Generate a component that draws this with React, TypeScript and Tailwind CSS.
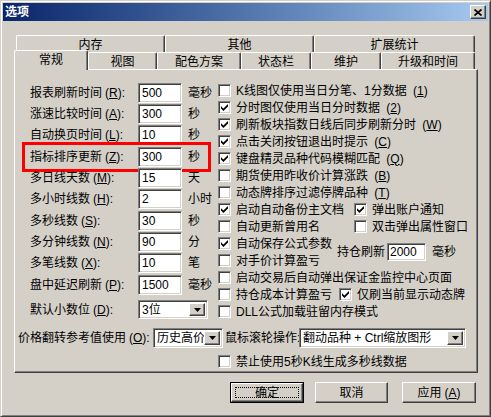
import React from 'react';

const sunken =
  'border border-t-[#808080] border-l-[#808080] border-b-white border-r-white shadow-[inset_1px_1px_0_#404040,inset_-1px_-1px_0_#d4d0c8] bg-white';
const raised =
  'border border-t-white border-l-white border-b-[#404040] border-r-[#404040] shadow-[inset_-1px_-1px_0_#808080] bg-[#d4d0c8]';

function Acc({ k }: { k: string }) {
  return (
    <span className="ml-[3px]">
      (<u>{k}</u>)
    </span>
  );
}

function Check({ checked }: { checked?: boolean }) {
  return (
    <span className={`flex items-center justify-center w-[13px] h-[13px] shrink-0 ${sunken}`}>
      {checked && (
        <svg width="7" height="7" viewBox="0 0 7 7">
          <path d="M0 2.2 L2.4 4.6 L7 0 V2.4 L2.4 7 L0 4.6 Z" fill="#000" />
        </svg>
      )}
    </span>
  );
}

function CheckItem({ checked, children, className = '' }: { checked?: boolean; children: React.ReactNode; className?: string }) {
  return (
    <div className={`flex items-center h-[17px] ${className}`}>
      <Check checked={checked} />
      <span className="ml-[5px] whitespace-nowrap">{children}</span>
    </div>
  );
}

function Arrow() {
  return (
    <span className={`flex items-center justify-center w-[16px] h-full shrink-0 ${raised}`}>
      <svg width="7" height="4" viewBox="0 0 7 4">
        <path d="M0 0 H7 L3.5 4 Z" fill="#000" />
      </svg>
    </span>
  );
}

function Combo({ value, className }: { value: string; className: string }) {
  return (
    <div className={`flex items-stretch p-[2px] ${sunken} ${className}`}>
      <span className="flex-1 flex items-center pl-[1px] whitespace-nowrap overflow-hidden">{value}</span>
      <Arrow />
    </div>
  );
}

const leftRows = [
  { label: '报表刷新时间', k: 'R', value: '500', unit: '毫秒' },
  { label: '涨速比较时间', k: 'A', value: '300', unit: '秒' },
  { label: '自动换页时间', k: 'L', value: '10', unit: '秒' },
  { label: '指标排序更新', k: 'Z', value: '300', unit: '秒', mark: true },
  { label: '多日线天数', k: 'M', value: '15', unit: '天' },
  { label: '多小时线数', k: 'H', value: '2', unit: '小时' },
  { label: '多秒线数', k: 'S', value: '30', unit: '秒' },
  { label: '多分钟线数', k: 'N', value: '90', unit: '分' },
  { label: '多笔线数', k: 'X', value: '10', unit: '笔' },
  { label: '盘中延迟刷新', k: 'P', value: '1500', unit: '毫秒' },
];

function LeftColumn() {
  return (
    <div className="ml-[15px] w-[188px] shrink-0 flex flex-col">
      {leftRows.map((r) => (
        <div key={r.label} className="relative flex items-center h-[21.33px]">
          <span className="w-[108px] whitespace-nowrap">
            {r.label}
            <Acc k={r.k} />:
          </span>
          <span className={`flex items-center w-[44px] h-[20px] pl-[3px] ${sunken}`}>{r.value}</span>
          <span className="ml-[6px] whitespace-nowrap">{r.unit}</span>
          {r.mark && (
            <div className="absolute left-[-8px] top-[-4px] w-[189px] h-[30px] border-[3px] border-[#ff0000]" />
          )}
        </div>
      ))}
      <div className="flex items-center h-[19px] mt-[5px]">
        <span className="w-[108px] whitespace-nowrap">
          默认小数位
          <Acc k="D" />:
        </span>
        <Combo value="3位" className="w-[70px] h-[19px]" />
      </div>
    </div>
  );
}

function RightColumn() {
  return (
    <div className="flex flex-col">
      <CheckItem>K线图仅使用当日分笔、1分数据 <Acc k="1" /></CheckItem>
      <CheckItem checked>分时图仅使用当日分时数据 <Acc k="2" /></CheckItem>
      <CheckItem checked>刷新板块指数日线后同步刷新分时 <Acc k="W" /></CheckItem>
      <CheckItem checked>点击关闭按钮退出时提示 <Acc k="C" /></CheckItem>
      <CheckItem checked>键盘精灵品种代码模糊匹配 <Acc k="Q" /></CheckItem>
      <CheckItem>期货使用昨收价计算涨跌 <Acc k="B" /></CheckItem>
      <CheckItem>动态牌排序过滤停牌品种 <Acc k="T" /></CheckItem>
      <div className="flex">
        <CheckItem checked className="w-[136px]">启动自动备份主文档</CheckItem>
        <CheckItem checked>弹出账户通知</CheckItem>
      </div>
      <div className="flex">
        <CheckItem className="w-[136px]">自动更新曾用名</CheckItem>
        <CheckItem>双击弹出属性窗口</CheckItem>
      </div>
      <div className="flex items-center">
        <div className="flex flex-col w-[119px]">
          <CheckItem checked>自动保存公式参数</CheckItem>
          <CheckItem>对手价计算盈亏</CheckItem>
        </div>
        <span className="w-[50px] whitespace-nowrap">持仓刷新</span>
        <span className={`flex items-center w-[39px] h-[18px] pl-[2px] ${sunken}`}>2000</span>
        <span className="ml-[6px]">毫秒</span>
      </div>
      <CheckItem>启动交易后自动弹出保证金监控中心页面</CheckItem>
      <div className="flex">
        <CheckItem className="w-[121px]">持仓成本计算盈亏</CheckItem>
        <CheckItem checked>仅刷当前显示动态牌</CheckItem>
      </div>
      <CheckItem>DLL公式加载驻留内存模式</CheckItem>
    </div>
  );
}

function Panel() {
  return (
    <div className="w-[464px] h-[304px] border border-t-white border-l-white border-b-[#404040] border-r-[#404040] shadow-[inset_-1px_-1px_0_#808080]">
      <div className="flex pt-[12px]">
        <LeftColumn />
        <RightColumn />
      </div>
      <div className="flex items-center h-[20px] mt-[8px] ml-[3px]">
        <span className="w-[135px] whitespace-nowrap">
          价格翻转参考值使用
          <Acc k="O" />:
        </span>
        <Combo value="历史高价" className="w-[70px] h-[20px]" />
        <span className="ml-[2px] w-[74px] whitespace-nowrap">鼠标滚轮操作:</span>
        <Combo value="翻动品种 + Ctrl缩放图形" className="w-[167px] h-[20px]" />
      </div>
      <div className="mt-[5px] pl-[203px]">
        <CheckItem>禁止使用5秒K线生成多秒线数据</CheckItem>
      </div>
    </div>
  );
}

const topTabs = [
  { label: '内存', w: 'w-[149px]' },
  { label: '其他', w: 'w-[149px]' },
  { label: '扩展统计', w: 'w-[161px]' },
];

const bottomTabs = [
  { label: '视图', w: 'w-[69px]' },
  { label: '配色方案', w: 'w-[84px]' },
  { label: '状态栏', w: 'w-[70px]' },
  { label: '维护', w: 'w-[70px]' },
  { label: '升级和时间', w: 'w-[94px]' },
];

const tabEdge =
  'border-t border-l border-r border-t-white border-l-white border-r-[#404040] shadow-[inset_-1px_0_0_#808080] rounded-t-[2px] bg-[#d4d0c8]';

function Tabs() {
  return (
    <div>
      <div className="flex ml-[2px] h-[17px]">
        {topTabs.map((t) => (
          <div key={t.label} className={`flex items-center justify-center h-[17px] pt-[1px] ${t.w} ${tabEdge}`}>
            {t.label}
          </div>
        ))}
      </div>
      <div className="flex items-end h-[17px]">
        <div className={`relative z-10 -mb-[1px] flex items-center justify-center w-[74px] h-[20px] pb-[2px] ${tabEdge}`}>
          常规
        </div>
        {bottomTabs.map((t) => (
          <div key={t.label} className={`flex items-center justify-center h-[17px] pt-[1px] ${t.w} ${tabEdge}`}>
            {t.label}
          </div>
        ))}
      </div>
    </div>
  );
}

function Button({ children, className, primary }: { children: React.ReactNode; className: string; primary?: boolean }) {
  if (primary) {
    return (
      <div className={`h-[21px] border border-black ${className}`}>
        <div className={`h-full flex items-center justify-center p-[3px] ${raised}`}>
          <div className="w-full h-full flex items-center justify-center border border-dotted border-black">{children}</div>
        </div>
      </div>
    );
  }
  return <div className={`h-[21px] flex items-center justify-center ${raised} ${className}`}>{children}</div>;
}

export default function App() {
  return (
    <div className="w-[491px] h-[417px] bg-[#d4d0c8] border border-t-[#d4d0c8] border-l-[#d4d0c8] border-b-[#404040] border-r-[#404040] shadow-[inset_1px_1px_0_#ffffff,inset_-1px_-1px_0_#808080] p-[2px] text-black text-[12px] leading-none font-['Liberation_Sans','Noto_Sans_CJK_SC',sans-serif]">
      <div className="flex items-center h-[18px] bg-linear-to-r from-[#0a246a] to-[#a6caf0]">
        <span className="flex-1 pl-[2px] text-white font-bold">选项</span>
        <span className={`flex items-center justify-center w-[16px] h-[14px] mr-[2px] ${raised}`}>
          <svg width="8" height="7" viewBox="0 0 8 7">
            <path d="M0.5 0.5 L7.5 6.5 M7.5 0.5 L0.5 6.5" stroke="#000" strokeWidth="1.7" />
          </svg>
        </span>
      </div>
      <div className="pl-[11px] pt-[14px]">
        <Tabs />
        <Panel />
        <div className="flex mt-[9px]">
          <Button primary className="ml-[216px] w-[74px]">确定</Button>
          <Button className="ml-[11px] w-[73px]">取消</Button>
          <Button className="ml-[14px] w-[74px]">
            应用<Acc k="A" />
          </Button>
        </div>
      </div>
    </div>
  );
}
